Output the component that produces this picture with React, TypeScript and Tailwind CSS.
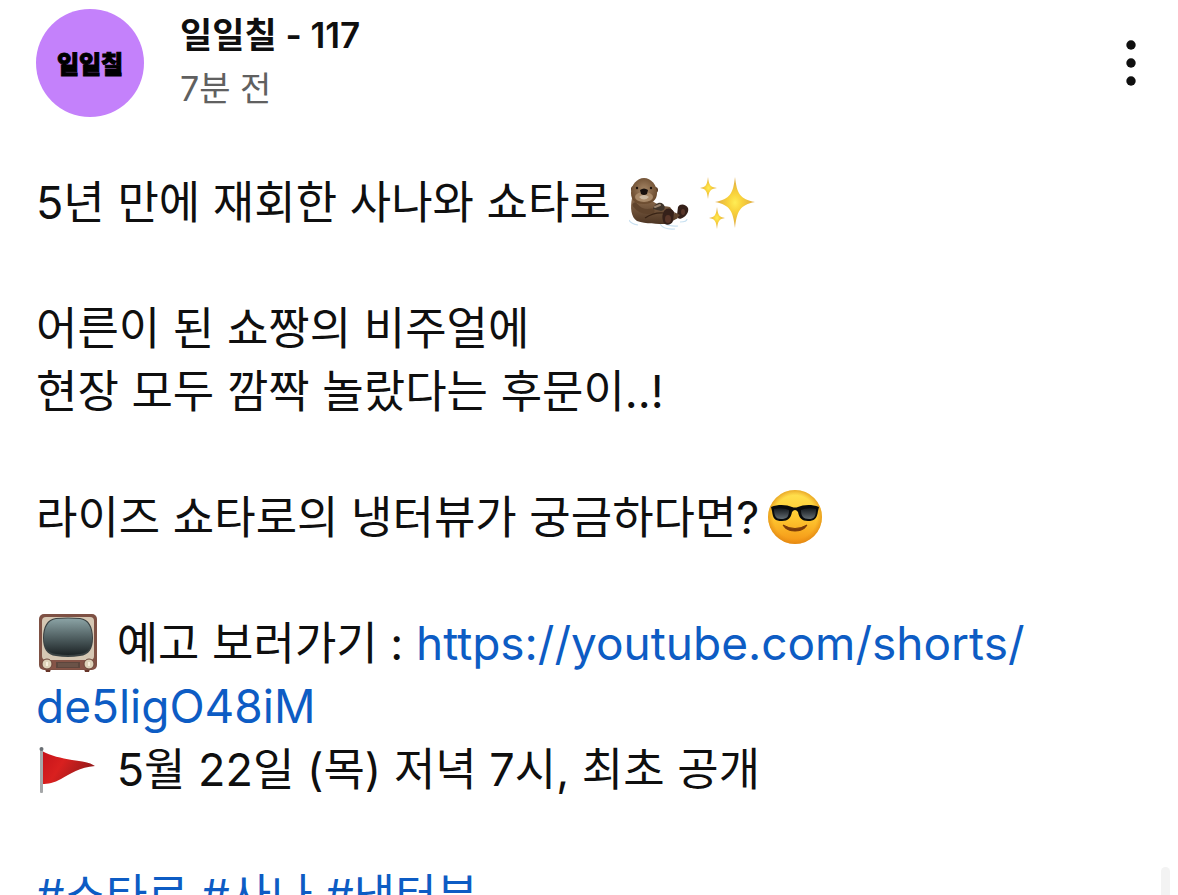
import type { ReactNode } from "react";

const emojiBox = "-my-4 inline-block h-[60px] w-[60px] align-[3px]";

function Otter() {
  return (
    <svg role="img" aria-label="수달" viewBox="0 -4 60 60" className={emojiBox}>
      <defs>
        <linearGradient id="fur" x1="0" y1="0" x2="0" y2="1">
          <stop offset="0" stopColor="#8b6a4c" />
          <stop offset="1" stopColor="#4d3523" />
        </linearGradient>
        <radialGradient id="furHead" cx="0.5" cy="0.45" r="0.6">
          <stop offset="0" stopColor="#a58666" />
          <stop offset="1" stopColor="#654529" />
        </radialGradient>
      </defs>
      <path d="M0 44q2 4 9 5M31 48q4 6 15 5M35 47q6 4 14 3M51 46q7 0 7-3" fill="none" stroke="#c9e1f1" strokeWidth="1.2" />
      <path d="M3 22C1 32 2 41 8 45c9 3 20 3 30 3l11-6-8-11c-7-1-12-2-18-6z" fill="url(#fur)" />
      <path d="M6 29c4 5 9 8 17 6" fill="none" stroke="#5f432c" strokeWidth="5" strokeLinecap="round" />
      <path d="M24 33c1-5 7-8 10-5 3 3 2 6-2 7z" fill="#40352b" />
      <path d="M26 31l5-2" stroke="#9b8570" strokeWidth="2" strokeLinecap="round" />
      <path d="M16 42q9-6 19-5" fill="none" stroke="#382315" strokeWidth="1.2" />
      <circle cx="5" cy="13" r="3" fill="#553822" />
      <circle cx="26" cy="14" r="3" fill="#553822" />
      <path d="M15 2C8 2 2 9 2 17c0 8 5 11 13 11s13-4 13-11C28 9 22 2 15 2z" fill="url(#furHead)" />
      <ellipse cx="15" cy="21" rx="9" ry="5" fill="#a98a6a" />
      <path d="M11 14q4-3 8 0l-1 4q-3 2-6 0z" fill="#17100e" />
      <path d="M10 21q5-4 10 0-5 5-10 0z" fill="#cbb9a2" />
      <circle cx="8" cy="12" r="1.2" fill="#1d120c" />
      <circle cx="22" cy="12" r="1.2" fill="#1d120c" />
      <path d="M35 35c3-4 8-3 10 1l-1 9c-2 5-9 5-10 0-1-4-1-6 1-10z" fill="#352019" />
      <path d="M49 31c2-4 8-3 10 1 1 3-1 7-4 9-4 3-7 2-7-2z" fill="#352019" />
      <path d="M45 36l6 3-4 4z" fill="#62452f" />
      <ellipse cx="39" cy="43" rx="3" ry="4" fill="#593629" />
      <ellipse cx="54" cy="36" rx="2" ry="3" fill="#593629" />
    </svg>
  );
}

function Sparkles() {
  return (
    <svg role="img" aria-label="반짝임" viewBox="0 -4 60 60" className={emojiBox}>
      <defs>
        <radialGradient id="gold">
          <stop offset="0" stopColor="#ffed55" />
          <stop offset="0.35" stopColor="#f9d33c" />
          <stop offset="1" stopColor="#dca743" />
        </radialGradient>
      </defs>
      <g fill="url(#gold)">
        <path d="M36 1c2 17 5 22 20 25-15 3-18 9-20 26-2-17-5-23-20-26 15-3 18-8 20-25z" />
        <path d="M9 1c1 8 2 10 9 11-7 1-8 3-9 11-1-8-2-10-8-11 6-1 7-3 8-11z" />
        <path d="M18 31c1 8 2 10 8 11-6 1-7 3-8 11-1-8-2-10-8-11 6-1 7-3 8-11z" />
      </g>
    </svg>
  );
}

function Sunglasses() {
  return (
    <svg role="img" aria-label="선글라스를 낀 얼굴" viewBox="0 0 60 60" className={emojiBox}>
      <defs>
        <linearGradient id="face" x1="0" y1="0" x2="0" y2="1">
          <stop offset="0" stopColor="#ffe452" />
          <stop offset="0.5" stopColor="#ffc931" />
          <stop offset="1" stopColor="#f39315" />
        </linearGradient>
        <radialGradient id="faceGlow" cx="0.5" cy="0.5" r="0.5">
          <stop offset="0.8" stopColor="#e98a12" stopOpacity="0" />
          <stop offset="1" stopColor="#d98210" stopOpacity="0.6" />
        </radialGradient>
        <linearGradient id="lens" x1="0" y1="0" x2="0" y2="1">
          <stop offset="0" stopColor="#14191d" />
          <stop offset="1" stopColor="#626b71" />
        </linearGradient>
      </defs>
      <circle cx="30" cy="30" r="27" fill="url(#face)" />
      <circle cx="30" cy="30" r="27" fill="url(#faceGlow)" />
      <path d="M6 20c8-3 16-2 21 0q3 1 6 0c5-2 13-3 21 0l-1 4c-1 8-4 10-10 10s-9-3-10-9q-3-4-6 0c-1 6-4 9-10 9-7 0-9-2-10-10z" fill="#090b0c" />
      <path d="M9 22q8-2 15 1c0 7-2 9-8 9-5 0-7-3-7-10zM36 23q7-3 15-1c0 8-2 10-7 10-6 0-8-3-8-9z" fill="url(#lens)" />
      <path d="M18 38q12 7 24 0-3 6-12 6t-12-6z" fill="#7a3a0a" stroke="#7a3a0a" strokeLinejoin="round" />
    </svg>
  );
}

function Television() {
  return (
    <svg role="img" aria-label="텔레비전" viewBox="0 0 60 60" className={emojiBox}>
      <defs>
        <linearGradient id="screen" x1="0" y1="0" x2="0" y2="1">
          <stop offset="0" stopColor="#8ba3a5" />
          <stop offset="0.5" stopColor="#536365" />
          <stop offset="1" stopColor="#1d2426" />
        </linearGradient>
      </defs>
      <path d="M7 56h6l-1 3H8zm39 0h6l-1 3h-4z" fill="#673529" />
      <rect x="1" y="1" width="58" height="56" rx="5" fill="#7e5144" />
      <rect x="4" y="4" width="52" height="43" rx="4" fill="#d5c7b3" />
      <path d="M18 5q12-1 24 0c9 1 13 9 13 20s-4 17-13 18q-12 2-24 0C9 42 5 36 5 25S9 6 18 5z" fill="#3a4243" />
      <path d="M18 6q12-1 24 0c8 1 12 9 12 19s-4 15-12 16q-12 2-24 0C10 40 6 35 6 25S10 7 18 6z" fill="url(#screen)" />
      <rect x="3" y="47" width="54" height="9" rx="2" fill="#865447" />
      <path d="M18 49h24v6H18z" fill="#5d463d" />
      <path d="M20 51h20M20 53h20" stroke="#7a6054" strokeWidth="1" />
      <circle cx="9" cy="51" r="5" fill="#ded2b9" stroke="#694437" />
      <circle cx="51" cy="51" r="5" fill="#ded2b9" stroke="#694437" />
      <path d="M9 49v4m42-4v4" stroke="#f7efdc" strokeWidth="2" />
    </svg>
  );
}

function Flag() {
  return (
    <svg role="img" aria-label="삼각 깃발" viewBox="0 0 60 60" className={emojiBox}>
      <defs>
        <linearGradient id="cloth" x1="0" y1="0" x2="1" y2="0.4">
          <stop offset="0" stopColor="#c4131a" />
          <stop offset="0.45" stopColor="#d9201f" />
          <stop offset="1" stopColor="#951a1b" />
        </linearGradient>
      </defs>
      <path d="M4 12c9 5 19 7 30 9 9 1 17 2 23 6-15 1-25 8-34 13-7 4-13 5-19 5z" fill="url(#cloth)" />
      <rect x="2" y="10" width="3" height="44" rx="1" fill="#a5a7a9" />
      <circle cx="3.5" cy="10" r="2" fill="#696e73" />
    </svg>
  );
}

function Paragraph({ children }: { children: ReactNode }) {
  return <p className="mb-[63px]">{children}</p>;
}

export default function App() {
  return (
    <main className="relative h-screen overflow-hidden bg-white px-9 font-['Inter','Noto_Sans_CJK_KR',sans-serif] text-[#0f0f0f]">
      <article lang="ko">
        <header className="flex items-start pt-[9px]">
          <a href="#channel" aria-label="일일칠 채널" className="flex size-[108px] shrink-0 items-center justify-center rounded-full bg-[#c481fb] font-['Noto_Sans_CJK_KR',sans-serif] text-[24px] leading-8 font-black text-black [-webkit-text-stroke:1px_black]">
            일일칠
          </a>
          <div className="ml-9 flex-1 text-[34px] leading-[53px]">
            <h1 className="text-[35px] font-semibold">일일칠 - 117</h1>
            <p className="text-[#606060]">7분 전</p>
          </div>
          <button type="button" aria-label="더보기" className="mt-7 -mr-2 flex h-[52px] w-9 items-center justify-center">
            <svg viewBox="0 0 12 52" className="h-[52px] w-3" fill="currentColor" aria-hidden="true">
              <circle cx="5" cy="8" r="4.7" />
              <circle cx="5" cy="26" r="4.7" />
              <circle cx="5" cy="44" r="4.7" />
            </svg>
          </button>
        </header>

        <div className="mt-[54px] text-[45px] leading-[63px]">
          <Paragraph>
            5년 만에 재회한 사나와 쇼타로{" "}
            <span className="ml-1.5">
              <Otter />
            </span>
            <span className="ml-2.5">
              <Sparkles />
            </span>
          </Paragraph>
          <Paragraph>
            어른이 된 쇼짱의 비주얼에
            <br />
            현장 모두 깜짝 놀랐다는 후문이..!
          </Paragraph>
          <Paragraph>
            라이즈 쇼타로의 냉터뷰가 궁금하다면?
            <span className="ml-1.5">
              <Sunglasses />
            </span>
          </Paragraph>
          <Paragraph>
            <span className="mr-1.5 ml-0.5">
              <Television />
            </span>{" "}
            예고 보러가기 :{" "}
            <a href="https://youtube.com/shorts/de5ligO48iM" className="text-[46px] text-[#0d5cc4]">
              https://youtube.com/shorts/<wbr />de5ligO48iM
            </a>
            <br />
            <span className="mr-1.5 ml-0.5">
              <Flag />
            </span>{" "}
            5월 22일 (목) 저녁 7시, 최초 공개
          </Paragraph>
          <p className="text-[#0d5cc4]">
            <a href="#shotaro">#쇼타로</a> <a href="#sana">#사나</a> <a href="#interview">#냉터뷰</a>
          </p>
        </div>
      </article>
      <div aria-hidden="true" className="absolute right-2 -bottom-2 h-9 w-[9px] rounded-full bg-[#f3f3f3]" />
    </main>
  );
}
